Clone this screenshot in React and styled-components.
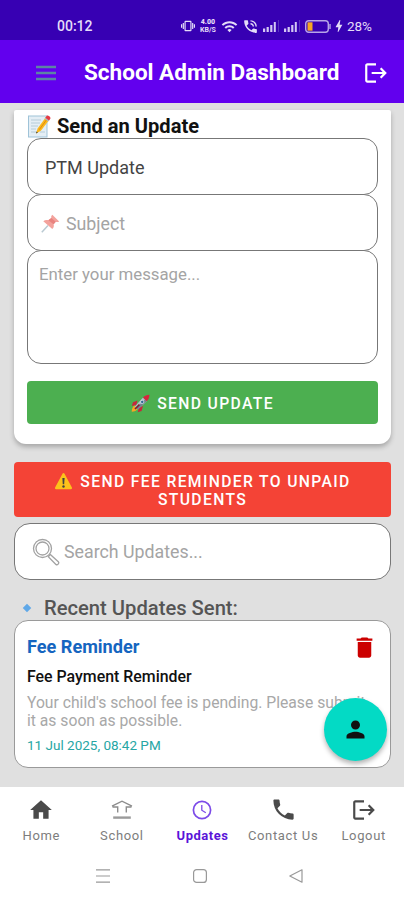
import React, { useState } from "react";
import styled, { createGlobalStyle } from "styled-components";
import {
  MdHome,
  MdPhone,
  MdLogout,
  MdDelete,
  MdPerson,
  MdWifi,
  MdVibration,
  MdPhoneInTalk,
  MdBolt,
} from "react-icons/md";

const NoteIcon = () => (
  <svg width="24" height="24" viewBox="0 0 24 24">
    <rect x="1.5" y="2" width="18.5" height="21" fill="#e4eef5" stroke="#9fc3d8" />
    <path
      d="M4 6h10M4 9h9M4 12h7M4 15h5M4 18h5M13 18h5"
      stroke="#b6ccd8"
      strokeWidth="1"
    />
    <path d="M9 19.5l1.6-5L19 3l3.5 2.6-8.6 11.2z" fill="#fbb81c" />
    <path d="M12.3 15.6L20.6 4.3" stroke="#e08a12" strokeWidth="1" />
    <path d="M18 4.2l1.6-2.3c.9-1.2 4.6 1.2 3.8 2.7L21.8 7z" fill="#e53945" />
    <path d="M17.5 4.8l.8-1.1 3.8 2.8-.8 1.1z" fill="#a9bcc7" />
    <path d="M9 19.5l.6-2 1.3 1z" fill="#333" />
  </svg>
);

const PinIcon = () => (
  <svg width="19" height="19" viewBox="0 0 19 19">
    <path d="M7 11.5L.8 18.2" stroke="#b9c9d2" strokeWidth="1.5" />
    <path
      d="M11.3.8l6.9 6.6c-1.4 1-2.7.6-3.4.3l-2.2 2.5c.6 2 .1 3.6-1.3 4.9L2.3 7.3c1.5-1.3 3.2-1.6 5-1l3-2.3c-.3-1.1 0-2.3 1-3.2z"
      fill="#f3a29c"
    />
    <path d="M7.3 6.3l3-2.3 4.5 3.7-2.2 2.5z" fill="#e9837f" />
  </svg>
);

const RocketIcon = () => (
  <svg width="19" height="19" viewBox="0 0 19 19">
    <path d="M6.5 6.5L2 8.3.8 12l4.5-1zM12 12l-1.4 5-3.9 1.2L8 13.5z" fill="#c5283d" />
    <path d="M3.6 11.5c-2 1-2.8 3.6-2.9 6.3 2.7-.1 5-1 6-3z" fill="#f6a723" />
    <path d="M3.8 12.6L12 3.4l3.8 3.8-9 8.2z" fill="#aebfca" />
    <path d="M5.3 14L14 5.4l1.8 1.8-9 8.2z" fill="#71838f" />
    <path d="M12 3.4C13.8 1.5 16 .7 18.4.7c0 2.4-.8 4.6-2.6 6.5z" fill="#d7263d" />
    <circle cx="11.2" cy="7.9" r="1.7" fill="#2f6b93" stroke="#e8eef2" strokeWidth=".7" />
    <path d="M4 15l4.5-4.5" stroke="#7d2232" strokeWidth="1.7" />
  </svg>
);

const WarningIcon = () => (
  <svg width="19" height="19" viewBox="0 0 19 19">
    <path
      d="M8.6 1.6c.4-.8 1.4-.8 1.8 0l7.5 14c.4.8 0 1.6-.9 1.6H2c-.9 0-1.3-.8-.9-1.6z"
      fill="#fcc21b"
    />
    <path d="M8.4 6h2.2l-.4 6.3H8.8z" fill="#424242" />
    <circle cx="9.5" cy="14.5" r="1.2" fill="#424242" />
  </svg>
);

const SearchIcon = () => (
  <svg width="28" height="28" viewBox="0 0 28 28" fill="none" stroke="#a2a2a2" strokeWidth="1.3">
    <circle cx="10.5" cy="10.5" r="9" />
    <circle cx="10.5" cy="10.5" r="6.5" />
    <path d="M16.3 18.7l2-2.3 8 7.4c1.3 1.4-.9 3.8-2.4 2.6z" />
  </svg>
);

const SchoolIcon = () => (
  <svg width="24" height="22" viewBox="0 0 24 22" fill="none" stroke="#8c8c8c">
    <path
      d="M2 7.2L12 2.2l10 5M2.5 8h5.2v5.5M21.500 8h-5.200v5.500"
      strokeWidth="1.4"
    />
    <path d="M3.2 18.6h17.6" strokeWidth="2.4" stroke="#9b9b9b" />
  </svg>
);

const ClockIcon = () => (
  <svg width="22" height="22" viewBox="0 0 22 22" fill="none" stroke="#7c4be8">
    <circle cx="11" cy="11" r="8.6" strokeWidth="1.7" />
    <path d="M10.8 6v5.2l4 2.5" strokeWidth="1.3" />
  </svg>
);

const MenuIcon = () => (
  <svg width="20" height="16" viewBox="0 0 20 16" stroke="#5c84a4" strokeWidth="2.6">
    <path d="M0 2h20M0 8h20M0 14h20" />
  </svg>
);

const SignalIcon = () => (
  <svg width="17" height="12" viewBox="0 0 17 12">
    <path d="M0 8.5h2.2V12H0zM3.6 7h2.2v5H3.6zM7.2 5h2.2v7H7.2zM10.8 2h2v10h-2z" fill="#d4c8f4" />
    <path d="M15.5 0v12" stroke="#5a33bd" />
  </svg>
);

const BatteryIcon = () => (
  <svg width="26" height="13" viewBox="0 0 26 13">
    <rect x=".7" y=".7" width="22.6" height="11.6" rx="3" fill="none" stroke="#b7a5e8" strokeWidth="1.4" />
    <path d="M2.5 2.3h5v8.4h-5z" fill="#f5a623" />
    <path d="M25 4v5" stroke="#b7a5e8" strokeWidth="1.4" />
  </svg>
);

const navItems = [
  { label: "Home", icon: <MdHome size={26} /> },
  { label: "School", icon: <SchoolIcon /> },
  { label: "Updates", icon: <ClockIcon /> },
  { label: "Contact Us", icon: <MdPhone size={27} /> },
  { label: "Logout", icon: <MdLogout size={26} /> },
];

function App() {
  const [active, setActive] = useState("Updates");
  const [type, setType] = useState("PTM Update");

  return (
    <Screen>
      <GlobalStyle />
      <StatusBar>
        <Time>00:12</Time>
        <StatusIcons>
          <MdVibration size={14} />
          <Speed>
            <b>4.00</b>
            <span>KB/S</span>
          </Speed>
          <MdWifi size={17} />
          <MdPhoneInTalk size={17} />
          <SignalIcon />
          <SignalIcon />
          <BatteryIcon />
        </StatusIcons>
        <Charge>
          <MdBolt size={16} />
          28%
        </Charge>
      </StatusBar>
      <AppBar>
        <MenuIcon />
        <AppTitle>School Admin Dashboard</AppTitle>
        <MdLogout size={26} />
      </AppBar>

      <Content>
        <FormCard>
          <FormTitle>
            <NoteIcon />
            Send an Update
          </FormTitle>
          <TypeInput value={type} onChange={(e) => setType(e.target.value)} />
          <Field>
            <PinIcon />
            <FieldInput placeholder="Subject" />
          </Field>
          <MessageInput placeholder="Enter your message..." />
          <SendButton>
            <RocketIcon />
            SEND UPDATE
          </SendButton>
        </FormCard>

        <ReminderButton>
          <ReminderLine>
            <WarningIcon />
            SEND FEE REMINDER TO UNPAID
          </ReminderLine>
          <ReminderLine>STUDENTS</ReminderLine>
        </ReminderButton>

        <SearchField>
          <SearchIcon />
          <FieldInput placeholder="Search Updates..." />
        </SearchField>

        <ListTitle>
          <Diamond />
          Recent Updates Sent:
        </ListTitle>
        <UpdateCard>
          <UpdateHead>
            Fee Reminder
            <MdDelete size={27} color="#cc0000" />
          </UpdateHead>
          <UpdateSubject>Fee Payment Reminder</UpdateSubject>
          <UpdateText>
            Your child's school fee is pending. Please submit
            <br />
            it as soon as possible.
          </UpdateText>
          <UpdateDate>11 Jul 2025, 08:42 PM</UpdateDate>
          <Fab>
            <MdPerson size={27} />
          </Fab>
        </UpdateCard>
      </Content>

      <BottomNav>
        {navItems.map((item) => (
          <NavItem
            key={item.label}
            $active={active === item.label}
            onClick={() => setActive(item.label)}
          >
            <NavIcon>{item.icon}</NavIcon>
            {item.label}
          </NavItem>
        ))}
      </BottomNav>
      <SystemNav>
        <svg width="14" height="14" viewBox="0 0 14 14" stroke="#999" strokeWidth="1.2">
          <path d="M0 .8h14M0 7h14M0 13.2h14" />
        </svg>
        <svg width="14" height="14" viewBox="0 0 14 14" fill="none" stroke="#999" strokeWidth="1.2">
          <rect x=".6" y=".6" width="12.8" height="12.8" rx="3" />
        </svg>
        <svg width="14" height="14" viewBox="0 0 14 14" fill="none" stroke="#999" strokeWidth="1.2">
          <path d="M13 .8v12.4L.8 7z" strokeLinejoin="round" />
        </svg>
      </SystemNav>
    </Screen>
  );
}

const GlobalStyle = createGlobalStyle`
  * {
    box-sizing: border-box;
  }

  body {
    margin: 0;
    font-family: Roboto, "Liberation Sans", sans-serif;
  }

  svg {
    flex-shrink: 0;
    display: block;
  }

  input, textarea, button {
    font-family: inherit;
  }
`;

const Screen = styled.div`
  width: 404px;
  height: 900px;
  display: flex;
  flex-direction: column;
  overflow: hidden;
  background-color: #fff;
`;

// Top bars
const StatusBar = styled.div`
  height: 40px;
  padding: 12px 32px 0 57px;
  display: flex;
  align-items: center;
  background-color: #3700b3;
  color: #e4dcf8;
`;

const Time = styled.span`
  width: 125px;
  font-size: 14px;
  font-weight: 500;
`;

const StatusIcons = styled.div`
  display: flex;
  align-items: center;
  gap: 4px;
`;

const Speed = styled.div`
  width: 18px;
  display: flex;
  flex-direction: column;
  font-size: 7px;
  line-height: 8px;
  text-align: center;
  font-weight: 700;
`;

const Charge = styled.span`
  margin-left: auto;
  display: flex;
  align-items: center;
  font-size: 13.5px;
`;

const AppBar = styled.header`
  height: 63px;
  padding: 2px 15px 0 36px;
  display: flex;
  align-items: center;
  background-color: #6200ee;
  color: #fff;
`;

const AppTitle = styled.h1`
  flex: 1;
  margin: 0 0 0 28px;
  font-size: 22.5px;
  line-height: 27px;
  font-weight: 700;
  white-space: nowrap;
`;

const Content = styled.main`
  height: 684px;
  padding: 7px 13px 0 14px;
  display: flex;
  flex-direction: column;
  background-color: #e0e0e0;
`;

// Form
const FormCard = styled.section`
  height: 334px;
  padding: 4px 13px 20px;
  display: flex;
  flex-direction: column;
  background-color: #fff;
  border-radius: 2px 2px 12px 12px;
  box-shadow: 0 3px 5px rgba(0, 0, 0, 0.25);
`;

const FormTitle = styled.h2`
  height: 24px;
  margin: 0;
  display: flex;
  align-items: center;
  gap: 6px;
  font-size: 20.1px;
  font-weight: 700;
  color: #111;
  white-space: nowrap;
`;

const Field = styled.div`
  height: 57px;
  padding: 2px 13px 0;
  margin-bottom: -1px;
  display: flex;
  align-items: center;
  gap: 6px;
  background-color: #fff;
  border: 1px solid #777;
  border-radius: 14px;
`;

const FieldInput = styled.input`
  flex: 1;
  min-width: 0;
  padding: 0;
  border: none;
  outline: none;
  background: transparent;
  font-size: 17.8px;

  &::placeholder {
    color: #a4a4a4;
    opacity: 1;
  }
`;

const TypeInput = styled.input`
  height: 57px;
  padding: 2px 17px 0;
  margin-bottom: -1px;
  border: 1px solid #777;
  border-radius: 14px;
  outline: none;
  font-size: 18px;
  color: #444;
`;

const MessageInput = styled.textarea`
  height: 114px;
  padding: 13px 11px;
  border: 1px solid #777;
  border-radius: 14px;
  outline: none;
  resize: none;
  font-size: 16.8px;

  &::placeholder {
    color: #a4a4a4;
    opacity: 1;
  }
`;

const SendButton = styled.button`
  height: 43px;
  margin-top: 17px;
  padding: 2px 0 0;
  display: flex;
  align-items: center;
  justify-content: center;
  gap: 7px;
  border: none;
  border-radius: 4px;
  background-color: #4caf50;
  color: #fff;
  font-size: 15.7px;
  font-weight: 500;
  letter-spacing: 1.35px;
`;

const ReminderButton = styled.button`
  height: 55px;
  margin-top: 18px;
  padding: 2px 0 0;
  display: flex;
  flex-direction: column;
  align-items: center;
  justify-content: center;
  border: none;
  border-radius: 4px;
  background-color: #f44336;
  color: #fff;
  font-size: 15.7px;
  font-weight: 500;
  letter-spacing: 1.35px;
`;

const ReminderLine = styled.span`
  display: flex;
  align-items: center;
  gap: 7px;
  line-height: 18px;
`;

const SearchField = styled(Field)`
  margin: 6px 0 0;
  padding: 0 17px;
  gap: 4px;
  border-radius: 16px;
`;

// List of sent updates
const ListTitle = styled.h2`
  height: 24px;
  margin: 16px 0 0;
  padding-left: 9px;
  display: flex;
  align-items: center;
  font-size: 20.2px;
  font-weight: 500;
  color: #555;
`;

const Diamond = styled.span`
  width: 6px;
  height: 6px;
  margin: 0 14px 0 1px;
  background-color: #5fa8e8;
  transform: rotate(45deg);
`;

const UpdateCard = styled.article`
  position: relative;
  height: 148px;
  padding: 12px 12px 0;
  background-color: #fff;
  border: 1px solid #9a9a9a;
  border-radius: 14px;
`;

const UpdateHead = styled.div`
  height: 28px;
  display: flex;
  align-items: center;
  justify-content: space-between;
  font-size: 18.1px;
  line-height: 20px;
  font-weight: 700;
  color: #1565c0;
`;

const UpdateSubject = styled.div`
  margin-top: 6px;
  font-size: 15.9px;
  line-height: 20px;
  font-weight: 500;
  color: #111;
`;

const UpdateText = styled.p`
  margin: 7px 0 0;
  font-size: 15.7px;
  line-height: 18px;
  color: #a8a8a8;
  white-space: nowrap;
`;

const UpdateDate = styled.div`
  margin-top: 7px;
  font-size: 13.5px;
  line-height: 16px;
  color: #26a6a4;
`;

const Fab = styled.button`
  position: absolute;
  right: 3px;
  bottom: 6px;
  width: 63px;
  height: 63px;
  padding: 0;
  display: flex;
  align-items: center;
  justify-content: center;
  border: none;
  border-radius: 50%;
  background-color: #03dac5;
  color: #111;
  box-shadow: 0 3px 5px rgba(0, 0, 0, 0.3);
`;

// Bottom bars
const BottomNav = styled.nav`
  height: 65px;
  padding-left: 1px;
  display: grid;
  grid-template-columns: repeat(5, 1fr);
  background-color: #fff;
`;

const NavItem = styled.button`
  padding: 9px 0 0;
  display: flex;
  flex-direction: column;
  align-items: center;
  gap: 5px;
  border: none;
  background: transparent;
  font-size: 13px;
  line-height: 16px;
  font-weight: ${(props) => (props.$active ? 700 : 400)};
  letter-spacing: ${(props) => (props.$active ? "0.5px" : "0.65px")};
  color: ${(props) => (props.$active ? "#5a14d8" : "#7d7d7d")};
  white-space: nowrap;
`;

const NavIcon = styled.span`
  height: 27px;
  display: flex;
  align-items: center;
  color: #4a4a4a;
`;

const SystemNav = styled.div`
  height: 48px;
  padding: 0 101px 0 96px;
  display: flex;
  align-items: center;
  justify-content: space-between;
  background-color: #fff;
`;

export default App;
